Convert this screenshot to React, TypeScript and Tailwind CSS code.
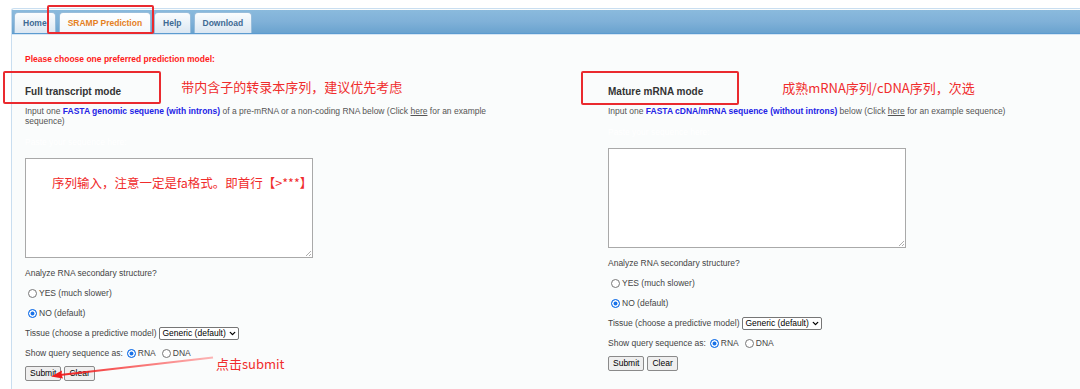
import { ChevronDown } from "lucide-react";

const cjk = "font-['Noto_Sans_CJK_SC',sans-serif]";

function Tab({ label, active }: { label: string; active?: boolean }) {
  return (
    <div
      className={
        "flex h-[21px] items-center rounded-t-[4px] border border-b-0 border-[#98bddb] px-[8px] text-[8.5px] font-bold " +
        (active
          ? "bg-gradient-to-b from-[#ffffff] to-[#f3f7fb] text-[#e5801f]"
          : "bg-gradient-to-b from-[#fbfdfe] to-[#dbe7f2] text-[#3e6a94]")
      }
    >
      {label}
    </div>
  );
}

function Radio({ checked }: { checked?: boolean }) {
  return (
    <span
      className={
        "inline-block h-[9px] w-[9px] shrink-0 rounded-full border " +
        (checked
          ? "border-[#1a73e8] bg-[#1a73e8] shadow-[inset_0_0_0_1.5px_#fff]"
          : "border-[#777] bg-white")
      }
    />
  );
}

function Btn({ label }: { label: string }) {
  return (
    <button className="h-[15px] rounded-[2px] border border-[#8a8a8a] bg-[#efefef] px-[4px] text-[8.5px] leading-none text-black">
      {label}
    </button>
  );
}

// textarea box with the little resize grip in its corner
function SeqBox({ w, children }: { w: string; children?: React.ReactNode }) {
  return (
    <div className={`relative mt-[11px] h-[100px] border border-[#a9a9a9] bg-white ${w}`}>
      {children}
      <svg className="absolute bottom-[1px] right-[1px]" width="6" height="6" viewBox="0 0 6 6">
        <path d="M6 1 L1 6 M6 4 L4 6" stroke="#999" strokeWidth="0.8" />
      </svg>
    </div>
  );
}

function Options() {
  return (
    <div className="text-[8.5px] text-[#444]">
      <div className="mt-[5px] flex h-[20px] items-center">Analyze RNA secondary structure?</div>
      <div className="flex h-[20px] items-center gap-[2px] pl-[3px]">
        <Radio />
        <span>YES (much slower)</span>
      </div>
      <div className="flex h-[20px] items-center gap-[2px] pl-[3px]">
        <Radio checked />
        <span>NO (default)</span>
      </div>
      <div className="flex h-[20px] items-center gap-[2px]">
        <span>Tissue (choose a predictive model)</span>
        <span className="flex h-[13px] items-center gap-[2px] rounded-[2px] border border-[#767676] bg-white pl-[3px] pr-[1px] text-black">
          Generic (default)
          <ChevronDown className="h-[9px] w-[9px]" strokeWidth={3.5} />
        </span>
      </div>
      <div className="flex h-[20px] items-center">
        <span>Show query sequence as:</span>
        <span className="ml-[4px] flex items-center gap-[2px]">
          <Radio checked />
          RNA
        </span>
        <span className="ml-[6px] flex items-center gap-[2px]">
          <Radio />
          DNA
        </span>
      </div>
      <div className="mt-[3px] flex gap-[3px]">
        <Btn label="Submit" />
        <Btn label="Clear" />
      </div>
    </div>
  );
}

export default function App() {
  return (
    <div className="relative h-[389px] w-[1080px] overflow-hidden bg-white font-['Liberation_Sans',Arial,sans-serif]">
      <div className="ml-[11px] mt-[8px] h-full rounded-tl-[3px] border-l border-t border-[#c9def0] bg-[#fafcfc]">
        <nav className="mt-[1px] flex h-[24px] items-end gap-[3px] border-b border-[#5b9bd0] bg-gradient-to-b from-[#8abadd] via-[#80b1d8] to-[#6aa3cf] pl-[2px]">
          <Tab label="Home" />
          <Tab label="SRAMP Prediction" active />
          <Tab label="Help" />
          <Tab label="Download" />
        </nav>
        <div className="border-t border-[#d6e6f4] pl-[13px] pt-[18px]">
          <p className="h-[12px] text-[8.5px] font-bold leading-[12px] text-[#ff1a1a]">
            Please choose one preferred prediction model:
          </p>

          <div className="mt-[19px] flex">
            <section className="w-[583px] shrink-0">
              <div className="flex h-[14px] items-center">
                <h3 className="text-[10px] font-bold text-[#333]">Full transcript mode</h3>
                <span className={`ml-[60px] -mt-[8px] text-[13px] text-[#f02c2c] ${cjk}`}>
                  带内含子的转录本序列，建议优先考虑
                </span>
              </div>
              <p className="mt-[8px] w-[470px] text-[8.5px] leading-[10px] text-[#555]">
                Input one <b className="text-[#2323e6]">FASTA genomic sequene (with introns)</b> of a pre-mRNA or a
                non-coding RNA below (Click <u>here</u> for an example sequence)
              </p>
              <p className="mt-[11px] h-[10px] text-[8.5px] leading-[10px] text-white">Paste your sequence here:</p>
              <SeqBox w="w-[288px]">
                <span
                  className={`absolute left-[26px] top-[15px] whitespace-nowrap text-[12.5px] text-[#f02c2c] ${cjk}`}
                >
                  序列输入，注意一定是fa格式。即首行【&gt;***】
                </span>
              </SeqBox>
              <Options />
            </section>

            <section className="flex-1">
              <div className="flex h-[14px] items-center">
                <h3 className="text-[10px] font-bold text-[#333]">Mature mRNA mode</h3>
                <span className={`ml-[79px] -mt-[6px] text-[13px] text-[#f02c2c] ${cjk}`}>
                  成熟mRNA序列/cDNA序列，次选
                </span>
              </div>
              <p className="mt-[8px] text-[8.5px] leading-[10px] text-[#555]">
                Input one <b className="text-[#2323e6]">FASTA cDNA/mRNA sequence (without introns)</b> below (Click{" "}
                <u>here</u> for an example sequence)
              </p>
              <p className="mt-[11px] h-[10px] text-[8.5px] leading-[10px] text-white">Paste your sequence here:</p>
              <SeqBox w="w-[298px]" />
              <Options />
            </section>
          </div>
        </div>
      </div>

      {/* annotation boxes */}
      <div className="absolute left-[47px] top-[5px] h-[29px] w-[107px] rounded-[2px] border-2 border-[#ea2a2f]" />
      <div className="absolute left-[3px] top-[71px] h-[33px] w-[158px] rounded-[2px] border-2 border-[#ea2a2f]" />
      <div className="absolute left-[581px] top-[71px] h-[34px] w-[158px] rounded-[2px] border-2 border-[#ea2a2f]" />

      <span className={`absolute left-[216px] top-[354px] text-[13px] text-[#f02c2c] ${cjk}`}>点击submit</span>
      <svg className="absolute left-0 top-0" width="1080" height="389" viewBox="0 0 1080 389">
        <defs>
          <linearGradient id="arr" x1="213" y1="358" x2="52" y2="376" gradientUnits="userSpaceOnUse">
            <stop offset="0" stopColor="#ff3030" stopOpacity="0.35" />
            <stop offset="1" stopColor="#ee1c1c" />
          </linearGradient>
        </defs>
        <path d="M213 357.5 L60 375" stroke="url(#arr)" strokeWidth="2" fill="none" />
        <path d="M51 376.5 L62 370.5 L61.5 374.5 L63 378.5 Z" fill="#ee1c1c" />
      </svg>
    </div>
  );
}
